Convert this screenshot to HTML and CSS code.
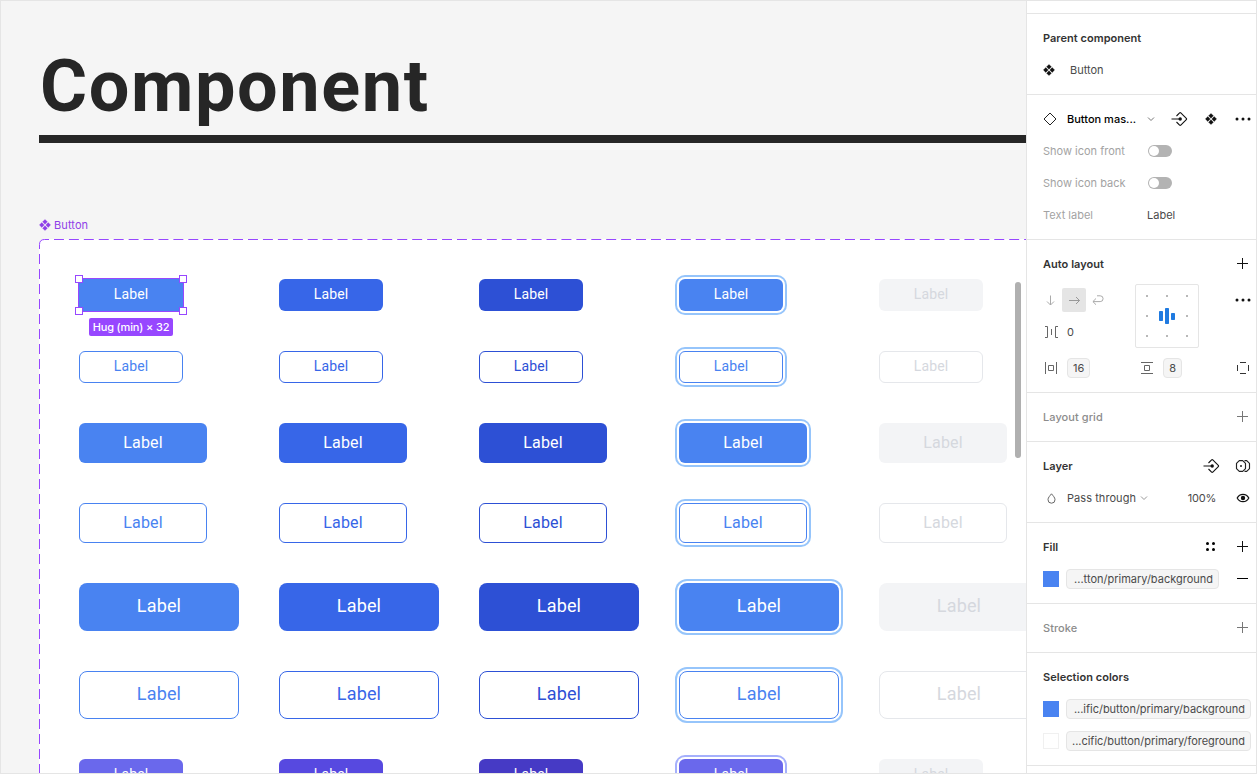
FILE: index.html
```html
<!DOCTYPE html>
<html lang="en">
<head>
<meta charset="utf-8">
<title>Component</title>
<link rel="stylesheet" href="styles.css">
</head>
<body>
<svg class="defs" width="0" height="0">
  <symbol id="component" viewBox="0 0 12 12"><path d="M6 .4 8.4 2.8 6 5.2 3.6 2.8zM6 6.8 8.4 9.2 6 11.6 3.6 9.2zM2.8 3.6 5.2 6 2.8 8.4.4 6zM9.2 3.6 11.6 6 9.2 8.4 6.8 6z" fill="currentColor" stroke="currentColor" stroke-width=".3" stroke-linejoin="round"/></symbol>
  <symbol id="swap" viewBox="0 0 17 16"><path d="M.5 8h8M5.500 5 8.600 1.900q.6-.6 1.200 0l5.500 5.500q.6.600 0 1.200L9.800 14.100q-.6.600-1.200 0L5.500 11" fill="none" stroke="currentColor" stroke-width="1.100"/><circle cx="9.200" cy="8" r="1.700" fill="currentColor"/></symbol>
  <symbol id="more" viewBox="0 0 16 16"><g fill="currentColor"><circle cx="2" cy="8" r="1.500"/><circle cx="8" cy="8" r="1.500"/><circle cx="14" cy="8" r="1.500"/></g></symbol>
  <symbol id="plus" viewBox="0 0 11 11"><path d="M0 5.500h11M5.500 0v11" stroke="currentColor"/></symbol>
  <symbol id="chevron" viewBox="0 0 8 6"><path d="M1 1.500l3 3 3-3" fill="none" stroke="currentColor"/></symbol>
</svg>
<div class="app">
  <main class="canvas">
    <h1 class="title">Component</h1>
    <div class="rule"></div>
    <div class="frame-name"><svg width="12" height="12"><use href="#component"/></svg>Button</div>
    <section class="frame">
      <svg class="dashes" width="990" height="540" fill="none" stroke="#9747ff"><path d="M.5 10V5.500Q.5.500 5.500.5H10"/><path d="M15 .5H990" stroke-dasharray="9.950 4.975"/><path d="M.5 15V540" stroke-dasharray="10 5"/></svg>
      <div class="row sm">
        <div class="btn solid blue selected">Label<i class="handle tl"></i><i class="handle tr"></i><i class="handle bl"></i><i class="handle br"></i><span class="size">Hug (min) × 32</span></div>
        <div class="btn solid hover">Label</div><div class="btn solid press">Label</div><div class="btn solid blue focus">Label</div><div class="btn solid off">Label</div>
      </div>
      <div class="row sm">
        <div class="btn line blue">Label</div><div class="btn line hover">Label</div><div class="btn line press">Label</div><div class="btn line blue focus">Label</div><div class="btn line off">Label</div>
      </div>
      <div class="row md">
        <div class="btn solid blue">Label</div><div class="btn solid hover">Label</div><div class="btn solid press">Label</div><div class="btn solid blue focus">Label</div><div class="btn solid off">Label</div>
      </div>
      <div class="row md">
        <div class="btn line blue">Label</div><div class="btn line hover">Label</div><div class="btn line press">Label</div><div class="btn line blue focus">Label</div><div class="btn line off">Label</div>
      </div>
      <div class="row lg">
        <div class="btn solid blue">Label</div><div class="btn solid hover">Label</div><div class="btn solid press">Label</div><div class="btn solid blue focus">Label</div><div class="btn solid off">Label</div>
      </div>
      <div class="row lg">
        <div class="btn line blue">Label</div><div class="btn line hover">Label</div><div class="btn line press">Label</div><div class="btn line blue focus">Label</div><div class="btn line off">Label</div>
      </div>
      <div class="row sm violet">
        <div class="btn solid blue">Label</div><div class="btn solid hover">Label</div><div class="btn solid press">Label</div><div class="btn solid blue focus">Label</div><div class="btn solid off">Label</div>
      </div>
    </section>
    <div class="scrollbar"></div>
  </main>

  <aside class="panel">
    <div class="topgap"></div>
    <section class="group">
      <div class="line-row"><h2>Parent component</h2></div>
      <div class="line-row"><svg class="parent-icon" width="12" height="12"><use href="#component"/></svg><span>Button</span></div>
    </section>

    <section class="group">
      <div class="line-row">
        <svg class="lead" width="14" height="14" viewBox="0 0 14 14"><path d="M7 1 13 7 7 13 1 7z" fill="none" stroke="#222" stroke-linejoin="round"/></svg>
        <span class="instance">Button mas...</span>
        <svg class="chev" width="8" height="6"><use href="#chevron"/></svg>
        <div class="tools">
          <span class="cell"><svg width="17" height="16"><use href="#swap"/></svg></span>
          <span class="cell"><svg width="12" height="12"><use href="#component"/></svg></span>
          <span class="cell"><svg width="16" height="16"><use href="#more"/></svg></span>
        </div>
      </div>
      <div class="line-row"><span class="prop">Show icon front</span><span class="toggle"></span></div>
      <div class="line-row"><span class="prop">Show icon back</span><span class="toggle"></span></div>
      <div class="line-row"><span class="prop">Text label</span><span>Label</span></div>
    </section>

    <section class="group">
      <div class="line-row"><h2>Auto layout</h2><div class="tools"><span class="cell odd"><svg width="11" height="11"><use href="#plus"/></svg></span></div></div>
      <div class="layout-row">
        <div class="layout-left">
          <div class="line-row flush">
            <span class="dir"><svg width="10" height="11" viewBox="0 0 10 11"><path d="M5.500.500V10M2 6.500 5.500 10 9 6.500" fill="none" stroke="#aaa"/></svg></span>
            <span class="dir active"><svg width="12" height="9" viewBox="0 0 12 9"><path d="M1 4.500H11.500M8 1 11.500 4.500 8 8" fill="none" stroke="#999"/></svg></span>
            <span class="dir"><svg width="12" height="11" viewBox="0 0 12 11"><path d="M5 .8h3.200a2.900 2.900 0 0 1 0 5.800H1M4 3.500.9 6.600 4 9.700" fill="none" stroke="#aaa"/></svg></span>
          </div>
          <div class="line-row flush">
            <svg class="space-icon" width="13" height="12" viewBox="0 0 13 12"><path d="M0 .5h2.500v11H0M13 .5h-2.500v11H13M6.500 3v6" fill="none" stroke="#666"/></svg><span>0</span>
          </div>
        </div>
        <div class="align"><i></i><i></i><i></i><i></i><svg width="16" height="16" viewBox="0 0 16 16"><g fill="#1f7ae0"><rect x="0" y="3" width="4" height="10" rx=".7"/><rect x="6" y="0" width="4" height="16" rx=".7"/><rect x="12" y="5" width="4" height="7" rx=".7"/></g></svg><i></i><i></i><i></i><i></i></div>
        <div class="tools"><span class="cell"><svg width="16" height="16"><use href="#more"/></svg></span></div>
      </div>
      <div class="line-row">
        <svg class="pad-icon" width="12" height="12" viewBox="0 0 12 12"><path d="M.5 0v12M11.500 0v12M3.500 3.500h5v5h-5z" fill="none" stroke="#666"/></svg><span class="pill">16</span>
        <svg class="pad-icon second" width="12" height="12" viewBox="0 0 12 12"><path d="M0 .5h12M0 11.500h12M3.500 3.500h5v5h-5z" fill="none" stroke="#666"/></svg><span class="pill">8</span>
        <div class="tools"><span class="cell"><svg width="12" height="12" viewBox="0 0 12 12"><path d="M3 .5h6M3 11.500h6M.5 3v6M11.500 3v6" stroke="#333"/></svg></span></div>
      </div>
    </section>

    <section class="group">
      <div class="line-row faded"><h2>Layout grid</h2><div class="tools"><span class="cell odd"><svg width="11" height="11"><use href="#plus"/></svg></span></div></div>
    </section>

    <section class="group">
      <div class="line-row"><h2>Layer</h2><div class="tools">
        <span class="cell"><svg width="17" height="16"><use href="#swap"/></svg></span>
        <span class="cell"><svg width="16" height="12" viewBox="0 0 16 12"><path d="M4.300.6h3.400L10.500 3.400v5.200L7.700 11.400H4.300L1.500 8.600V3.400zM9.500.6h2.200l2.800 2.800v5.200l-2.800 2.800H9.500" fill="none" stroke="#222" stroke-width="1.150" stroke-linejoin="round"/><circle cx="6" cy="6" r="1" fill="#222"/></svg></span>
      </div></div>
      <div class="line-row">
        <svg class="drop" width="9" height="11" viewBox="0 0 9 11"><path d="M4.500.8C3 2.800 1 4.500 1 6.700a3.500 3.500 0 0 0 7 0C8 4.500 6 2.800 4.500.8z" fill="none" stroke="#666"/></svg>
        <span class="mode">Pass through</span><svg class="chev near" width="8" height="6"><use href="#chevron"/></svg>
        <div class="tools"><span class="percent">100%</span><span class="cell"><svg width="14" height="10" viewBox="0 0 14 10"><path d="M1.200 5C3.700.1 10.300.1 12.800 5 10.300 9.900 3.700 9.900 1.200 5z" fill="none" stroke="#111" stroke-width="1.200"/><circle cx="7" cy="5" r="2.200" fill="#111"/></svg></span></div>
      </div>
    </section>

    <section class="group">
      <div class="line-row"><h2>Fill</h2><div class="tools">
        <span class="cell odd"><svg width="9" height="9" viewBox="0 0 9 9"><circle cx="1.500" cy="1.500" r="1.500"/><circle cx="7.500" cy="1.500" r="1.500"/><circle cx="1.500" cy="7.500" r="1.500"/><circle cx="7.500" cy="7.500" r="1.500"/></svg></span>
        <span class="cell odd"><svg width="11" height="11"><use href="#plus"/></svg></span>
      </div></div>
      <div class="line-row"><span class="swatch"></span><span class="pill short">...tton/primary/background</span><div class="tools"><span class="cell odd"><svg width="11" height="11" viewBox="0 0 11 11"><path d="M0 5.500h11" stroke="#000"/></svg></span></div></div>
    </section>

    <section class="group">
      <div class="line-row faded"><h2>Stroke</h2><div class="tools"><span class="cell odd"><svg width="11" height="11"><use href="#plus"/></svg></span></div></div>
    </section>

    <section class="group">
      <div class="line-row"><h2>Selection colors</h2></div>
      <div class="line-row"><span class="swatch"></span><span class="pill long">...ific/button/primary/background</span></div>
      <div class="line-row"><span class="swatch white"></span><span class="pill long">...cific/button/primary/foreground</span></div>
    </section>
  </aside>
</div>
</body>
</html>
```

FILE: styles.css
```css
* { box-sizing: border-box; }
body { margin: 0; font-family: Inter, sans-serif; font-size: 11px; }
svg { display: block; flex: none; }
.defs { position: absolute; }
h1, h2 { margin: 0; }

.app {
  display: flex;
  width: 1257px;
  height: 774px;
  border: 1px solid #e5e5e5;
  overflow: hidden;
}

/* Canvas */
.canvas {
  position: relative;
  width: 1025px;
  flex: none;
  height: 772px;
  padding: 38px 0 0 38px;
  background: #f5f5f5;
  overflow: hidden;
}
.title {
  height: 96px;
  padding-left: 1px;
  font: 700 72px/96px Roboto, sans-serif;
  letter-spacing: 1.6px;
  color: #262626;
}
.rule { height: 8px; background: #262626; }
.frame-name {
  display: flex;
  align-items: center;
  gap: 3px;
  height: 16px;
  margin: 74px 0 6px;
  color: #8f3fe8;
  letter-spacing: .1px;
}
.frame {
  position: relative;
  display: flex;
  flex-direction: column;
  gap: 40px;
  padding: 40px 0 0 40px;
  background: #fff;
  border-top-left-radius: 5px;
}
.dashes { position: absolute; left: 0; top: 0; }
.row { display: grid; grid-template-columns: repeat(5, 200px); font-family: Roboto, sans-serif; }
.btn {
  position: relative;
  display: flex;
  align-items: center;
  justify-content: center;
  border-radius: 6px;
  font-weight: 400;
}
.sm .btn { width: 104px; height: 32px; padding-bottom: 2px; font-size: 14px; letter-spacing: .15px; }
.md .btn { width: 128px; height: 40px; padding-bottom: 1px; font-size: 16px; letter-spacing: .15px; }
.lg .btn { width: 160px; height: 48px; padding-bottom: 4px; border-radius: 8px; font-size: 18px; letter-spacing: .15px; }

.blue { --tone: #4983f1; }
.hover { --tone: #3766e8; }
.press { --tone: #2d50d5; }
.off { --tone: #e5e7eb; }
.violet .blue { --tone: #6a68ec; }
.violet .hover { --tone: #5749e0; }
.violet .press { --tone: #463ac5; }
.solid { background: var(--tone); color: #fff; }
.line { border: 1px solid var(--tone); background: #fff; color: var(--tone); }
.solid.off { background: #f3f4f6; color: #d5d8de; }
.line.off { color: #d5d8de; }
.focus { box-shadow: 0 0 0 2px #fff, 0 0 0 4px #96c5fb; }
.violet .focus { box-shadow: 0 0 0 2px #fff, 0 0 0 4px #a5b0fc; }

.selected { outline: 1px solid #9747ff; border-radius: 0; }
.handle { position: absolute; width: 8px; height: 8px; background: #fff; border: 1px solid #9747ff; }
.tl { left: -4px; top: -4px; }
.tr { right: -4px; top: -4px; }
.bl { left: -4px; bottom: -4px; }
.br { right: -4px; bottom: -4px; }
.size {
  position: absolute;
  left: 10px;
  top: 39px;
  width: 84px;
  height: 18px;
  border-radius: 2px;
  background: #9747ff;
  font: 500 11px/18px Inter, sans-serif;
  letter-spacing: -.15px;
  text-align: center;
  white-space: nowrap;
}
.scrollbar {
  position: absolute;
  left: 1014px;
  top: 281px;
  width: 6px;
  height: 176px;
  border-radius: 3px;
  background: #b0b0b0;
}

/* Properties panel */
.panel {
  flex: 1;
  min-width: 0;
  border-left: 1px solid #e5e5e5;
  background: #fff;
  color: #4a4a4a;
  overflow: hidden;
  white-space: nowrap;
}
.topgap { height: 13px; border-bottom: 1px solid #e5e5e5; }
.group { width: 232px; padding: 8px 0; border-bottom: 1px solid #e5e5e5; }
.line-row { display: flex; align-items: center; height: 32px; padding-left: 16px; }
.line-row.flush { padding-left: 0; }
h2 { font-size: 11px; font-weight: 600; color: #333; letter-spacing: .03px; }
.faded h2 { font-weight: 500; color: #8c8c8c; letter-spacing: .06px; }
.tools { display: flex; align-items: center; margin-left: auto; color: #111; }
.faded .tools { color: #777; }
.cell { display: flex; align-items: center; justify-content: center; width: 32px; height: 32px; }
/* Odd-sized glyphs sit on whole pixels, left and above the centre line */
.odd { padding: 0 1px 1px 0; }
.parent-icon { margin-right: 15px; color: #111; }
.lead { margin-right: 10px; }
.instance { width: 80px; font-weight: 500; color: #000; }
.chev { color: #777; }
.chev.near { margin-left: 4px; color: #999; }
.mode { letter-spacing: .06px; }
.prop { width: 104px; color: #a3a3a3; }
.toggle {
  display: flex;
  width: 24px;
  height: 12px;
  margin-left: 1px;
  padding: 1px;
  border-radius: 6px;
  background: #b3b3b3;
}
.toggle::before { content: ""; width: 10px; height: 10px; border-radius: 5px; background: #fff; }

.layout-row { display: flex; height: 72px; align-items: flex-start; padding: 4px 0 4px 11px; }
.layout-left { width: 97px; }
.dir { display: flex; align-items: center; justify-content: center; width: 24px; height: 24px; }
.dir.active { background: #e5e5e5; border-radius: 2px; }
.space-icon { margin: 0 9px 0 7px; }
.align {
  display: grid;
  grid-template-columns: repeat(3, 20px);
  grid-template-rows: repeat(3, 20px);
  place-items: center;
  width: 64px;
  height: 64px;
  padding: 1px;
  border: 1px solid #e5e5e5;
  border-radius: 2px;
}
.align i { width: 2px; height: 2px; background: #b8b8b8; }
.pad-icon { margin: 0 10px 0 2px; }
.pad-icon.second { margin-left: 51px; }
.pill {
  height: 20px;
  border: 1px solid #e5e5e5;
  border-radius: 4px;
  background: #f5f5f5;
  line-height: 18px;
  padding: 0 5px;
}
.short { width: 153px; text-align: right; }
.long { width: 185px; text-align: right; letter-spacing: -.02px; }
.drop { margin: 0 11px 0 4px; }
.percent { margin-right: 11px; color: #4a4a4a; letter-spacing: -.2px; }
.swatch { width: 16px; height: 16px; margin-right: 7px; background: #4983f1; }
.swatch.white { background: #fff; border: 1px solid #f0f0f0; }
```
